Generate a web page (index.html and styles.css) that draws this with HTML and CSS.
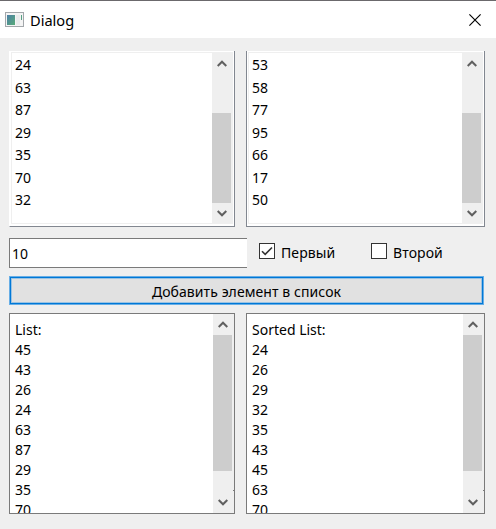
FILE: index.html
```html
<!DOCTYPE html>
<html lang="ru">
<head>
<meta charset="utf-8">
<title>Dialog</title>
<link rel="stylesheet" href="styles.css">
</head>
<body>
<div class="dialog">
  <header class="titlebar">
    <svg class="app-icon" width="19" height="15" viewBox="0 0 19 15">
      <defs><linearGradient id="g" x1="0" y1="0" x2="1" y2="1"><stop offset="0" stop-color="#4c7fa6"/><stop offset="1" stop-color="#58ab78"/></linearGradient></defs>
      <rect x=".5" y=".5" width="18" height="14" fill="#f4f4f4" stroke="#a3a7ab"/>
      <rect x="2" y="3" width="8" height="10" fill="url(#g)"/>
      <rect x="11" y="3" width="4" height="10" fill="#e9ebec"/>
      <rect x="16" y="3" width="1" height="5" fill="#57a084"/>
    </svg>
    <h1 class="title">Dialog</h1>
    <svg class="close" width="12" height="12" viewBox="0 0 12 12"><path d="M.4.4 11.6 11.6M11.6.4.4 11.6" fill="none" stroke="#000" stroke-width="1.15"/></svg>
  </header>
  <main class="content">
    <section class="pair">
      <div class="box list first">
        <ul class="items"><li>24</li><li>63</li><li>87</li><li>29</li><li>35</li><li>70</li><li>32</li></ul>
        <div class="scroll"><svg class="arrow" viewBox="0 0 10 7"><path d="M.7 6 5 1.7 9.3 6"/></svg><div class="thumb"></div><svg class="arrow down" viewBox="0 0 10 7"><path d="M.7 1 5 5.3 9.3 1"/></svg></div>
      </div>
      <div class="box list">
        <ul class="items"><li>53</li><li>58</li><li>77</li><li>95</li><li>66</li><li>17</li><li>50</li></ul>
        <div class="scroll"><svg class="arrow" viewBox="0 0 10 7"><path d="M.7 6 5 1.7 9.3 6"/></svg><div class="thumb"></div><svg class="arrow down" viewBox="0 0 10 7"><path d="M.7 1 5 5.3 9.3 1"/></svg></div>
      </div>
    </section>
    <section class="controls">
      <div class="field">10</div>
      <div class="check one"><svg class="tick" width="16" height="16" viewBox="0 0 16 16"><rect x=".5" y=".5" width="15" height="15"/><path d="M3 8.2 6.2 11.4 13 4.5"/></svg><span>Первый</span></div>
      <div class="check two"><svg class="tick" width="16" height="16" viewBox="0 0 16 16"><rect x=".5" y=".5" width="15" height="15"/></svg><span>Второй</span></div>
    </section>
    <button class="add"><span class="add-label">Добавить элемент в список</span></button>
    <section class="pair">
      <div class="box text">
        <ul class="items"><li>List:</li><li>45</li><li>43</li><li>26</li><li>24</li><li>63</li><li>87</li><li>29</li><li>35</li><li>70</li></ul>
        <div class="scroll"><svg class="arrow" viewBox="0 0 10 7"><path d="M.7 6 5 1.7 9.3 6"/></svg><div class="thumb"></div><div class="mark"></div><svg class="arrow down" viewBox="0 0 10 7"><path d="M.7 1 5 5.3 9.3 1"/></svg></div>
      </div>
      <div class="box text">
        <ul class="items"><li>Sorted List:</li><li>24</li><li>26</li><li>29</li><li>32</li><li>35</li><li>43</li><li>45</li><li>63</li><li>70</li></ul>
        <div class="scroll"><svg class="arrow" viewBox="0 0 10 7"><path d="M.7 6 5 1.7 9.3 6"/></svg><div class="thumb"></div><div class="mark"></div><svg class="arrow down" viewBox="0 0 10 7"><path d="M.7 1 5 5.3 9.3 1"/></svg></div>
      </div>
    </section>
  </main>
</div>
</body>
</html>
```
FILE: styles.css
```css
* { box-sizing: border-box; }
body { margin: 0; background: #efefef; overflow: hidden; }
.dialog {
  width: 496px;
  height: 529px;
  border-top: 1px solid #6b696c;
  font: 14px/20px "Noto Sans", "Open Sans", sans-serif;
  color: #000;
}
.titlebar {
  display: flex;
  align-items: center;
  height: 37px;
  padding: 0 15px 0 5px;
  background: #fff;
}
.app-icon { margin-top: -1px; }
.title { margin: 0 auto 0 6px; font-size: 14.6px; font-weight: 400; }
.content { padding: 13px 11px 0 9px; }
.pair { display: grid; grid-template-columns: 226px 239px; gap: 11px; }
.box {
  display: flex;
  justify-content: space-between;
  overflow: hidden;
  background: #fff;
}
.items { margin: 0; padding: 0; list-style: none; }
.scroll {
  display: flex;
  flex-direction: column;
  width: 21px;
  background: #efefef;
}
.thumb { width: 19px; background: #cdcdcd; }
.arrow {
  width: 10px;
  height: 7px;
  margin-left: 5px;
  fill: none;
  stroke: #606060;
  stroke-width: 2;
}
.list {
  height: 176px;
  padding: 1px 1px 2px 1px;
  border: 1px solid #828790;
  border-top: 0;
}
.list.first { border-left-color: #fff; }
.list .items {
  flex: 1;
  padding: 1px 0 0 3px;
  border: 1px solid #efefef;
  border-right: 0;
  line-height: 22.5px;
}
.list .scroll { padding-top: 8px; }
.list .thumb { height: 90px; margin-top: 46px; }
.list .down { margin-top: 7px; }
.controls {
  display: flex;
  height: 30px;
  margin-top: 11px;
}
.field {
  width: 238px;
  padding: 5px 2px;
  border: 1px solid #7a7a7a;
  border-right: 0;
  background: #fff;
}
.check { display: flex; gap: 6px; padding-top: 5px; }
.one { width: 112px; margin-left: 12px; }
.tick { fill: #fff; stroke: #333; }
.tick path { fill: none; stroke-width: 1.6; }
.check span { letter-spacing: .1px; }
.add {
  display: block;
  width: 475px;
  height: 29px;
  margin: 8px 0;
  padding: 2px 0 0;
  border: 1px solid #67aee6;
  box-shadow: inset 0 0 0 1px #0078d7, inset 0 0 0 2px #9cc3e2;
  background: #e1e1e1;
  color: #000;
  font: inherit;
  letter-spacing: .08px;
}
.text { height: 201px; border: 1px solid #7a7a7a; }
.text .items { padding: 6px 0 0 5px; }
.text .scroll { padding-top: 7px; }
.text .thumb { height: 136px; margin-top: 7px; }
.mark { width: 1px; height: 1px; margin: 19px 0 0 20px; background: #7a7a7a; }
.text .down { margin-top: 8px; }
```
